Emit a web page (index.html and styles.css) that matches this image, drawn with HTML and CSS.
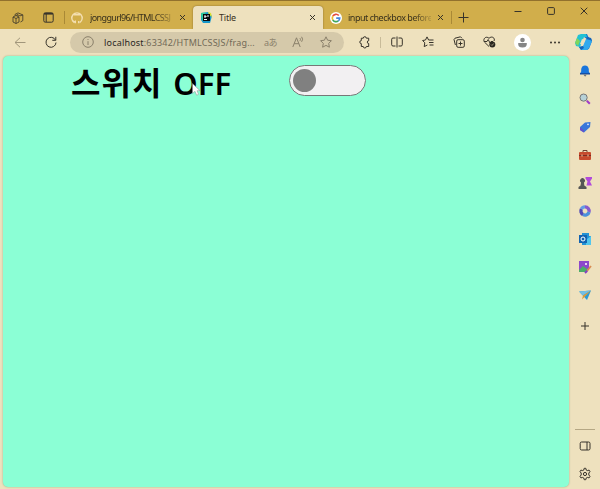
FILE: index.html
```html
<!DOCTYPE html>
<html lang="ko">
<head>
<meta charset="utf-8">
<title>Title</title>
<link rel="stylesheet" href="styles.css">
</head>
<body>
<div class="browser">
  <header class="tabs">
    <span class="slot wide first"><svg width="12" height="12" viewBox="0 0 12 12"><path stroke-width=".8" d="M1 5 4 3.5 7 5v5L4 11.5 1 10ZM1 5l3 1.5L7 5M4 6.5v5M3 3.7V2.4L6 .9l4.8 2v5.7L8.5 10M5 4V2.5l3 1.4 2.8-1"/></svg></span>
    <span class="slot wide"><svg width="11" height="11" viewBox="0 0 11 11"><rect x=".8" y=".8" width="9.4" height="9.4" rx="1.5"/><path stroke-width="1.6" d="M1 1.8h9"/><path d="M3.2 2v8"/></svg></span>
    <div class="tab github">
      <svg class="favicon" width="12" height="12" viewBox="0 0 12 12"><path class="octo" d="M4.3 11.2V9.4Q2.7 10.2 1.8 8.6M7.7 11.2V9M3.6 3.4V2.2l1.3.5h2.2l1.3-.5v1.2"/><path class="octo" d="M3.4 10.6A5.2 5.2 0 1 1 8.6 10.6"/></svg>
      <span class="name fade">jonggurl96/HTMLCSSJ</span>
      <svg class="close" width="7" height="7" viewBox="0 0 7 7"><path d="m1 1 5 5m0-5L1 6"/></svg>
    </div>
    <div class="tab active">
      <svg class="favicon" width="11" height="11" viewBox="0 0 11 11"><path fill="#1797ca" stroke="none" d="M0 1 7 0 11 4 9 11H2L0 8Z"/><path fill="#30d09c" stroke="none" d="m0 1 5-.5L1 9Z"/><path fill="#d8de35" stroke="none" d="m7 0 3 1 1 4-3-2Z"/><path fill="#080b10" stroke="none" d="M2 2h7v7H2z"/><path stroke="#fff" d="M3 4h2v1H3M6 4h2M3 7.5h3"/></svg>
      <span class="name">Title</span>
      <svg class="close" width="7" height="7" viewBox="0 0 7 7"><path d="m1 1 5 5m0-5L1 6"/></svg>
    </div>
    <div class="tab google">
      <svg class="favicon" width="12" height="12" viewBox="0 0 12 12"><circle cx="6" cy="6" r="6" fill="#fff" stroke="none"/><g stroke-width="1.7"><path stroke="#e34b3e" d="M2.8 4.2A3.7 3.7 0 0 1 8.8 3.5"/><path stroke="#eebb2e" d="M2.8 4.2a3.7 3.7 0 0 0 0 3.7"/><path stroke="#43a65a" d="M2.8 7.8a3.7 3.7 0 0 0 5.5 1.1"/><path stroke="#4285dc" d="M8.3 8.9A3.7 3.7 0 0 0 9.7 6.2H6.2"/></g></svg>
      <span class="name fade">input checkbox before</span>
      <svg class="close" width="7" height="7" viewBox="0 0 7 7"><path d="m1 1 5 5m0-5L1 6"/></svg>
    </div>
    <span class="slot plus"><svg width="11" height="11" viewBox="0 0 11 11"><path d="M5.5.5v10M.5 5.5h10"/></svg></span>
    <div class="window">
      <svg width="8" height="8" viewBox="0 0 8 8"><path d="M.5 4.5h7"/></svg>
      <svg width="8" height="8" viewBox="0 0 8 8"><rect x=".6" y=".6" width="6.8" height="6.8" rx="1"/></svg>
      <svg width="8" height="8" viewBox="0 0 8 8"><path d="m.7.7 6.6 6.6m0-6.6L.7 7.3"/></svg>
    </div>
  </header>
  <nav class="toolbar">
    <span class="slot back"><svg width="12" height="11" viewBox="0 0 12 11"><path d="M6 .8 1 5.5l5 4.7M1 5.5h10.5"/></svg></span>
    <span class="slot"><svg width="12" height="12" viewBox="0 0 12 12"><path d="M10.5 4.1A5 5 0 1 0 11 6.5M10.8.8v3.5H7.3"/></svg></span>
    <div class="address">
      <svg width="12" height="12" viewBox="0 0 12 12"><circle cx="6" cy="6" r="5.3"/><path d="M6 5.2V9M6 3v1"/></svg>
      <span class="url"><b>localhost</b>:63342/HTMLCSSJS/frag...</span>
      <span class="translate">aあ</span>
      <span class="slot"><svg width="12" height="12" viewBox="0 0 12 12"><path d="M.8 11 4.5 1.8 8.2 11M2.2 7.7h4.6M8 2.2Q9 3.5 8 4.8M9.6.8q2 2.4 0 5"/></svg></span>
      <span class="slot"><svg width="12" height="12" viewBox="0 0 12 12"><path d="m6 .8 1.6 3.4 3.8.5L8.7 7.4l.7 3.8L6 9.4l-3.4 1.8.7-3.8L.6 4.7l3.8-.5Z"/></svg></span>
    </div>
    <div class="tools">
      <span class="slot puzzle"><svg width="11" height="12" viewBox="0 0 11 12"><path d="M2.3 2.2h2a1.5 1.5 0 0 1 3 0h2.4v2.5a1.4 1.4 0 0 0 0 2.8v3H7.3a1.5 1.5 0 0 1-3 0h-2V7.6a1.5 1.5 0 0 1 0-3Z"/></svg></span>
      <span class="slot"><svg width="12" height="12" viewBox="0 0 12 12"><path d="M4.5 2H2Q.7 2 .7 3.2v5.6Q.7 10 2 10h2.5M7.5 2H10q1.3 0 1.3 1.2v5.6Q11.3 10 10 10H7.5M6 .5v11"/></svg></span>
      <span class="slot"><svg width="12" height="12" viewBox="0 0 12 12"><path d="M11.5 4H6.6L5 .9 3.5 4 .6 4.5l2.2 2.3-.6 3.8L5.4 9M7 6.5h4.5M7.5 9h4"/></svg></span>
      <span class="slot"><svg width="12" height="12" viewBox="0 0 12 12"><rect x="3.7" y="3.7" width="7.6" height="7.6" rx="1.4"/><path d="M7.5 5.5v4M5.5 7.5h4M2.4 9 1 3.5 2 2.2 7.5.8 9 2.3"/></svg></span>
      <span class="slot"><svg width="13" height="12" viewBox="0 0 13 12"><path d="M6 10.5 1.4 6C-.5 3 3-.6 6 2.3 9-.6 12.5 2.2 11 5M1 5.5h3l1.2-2L7 7l1-1.5h2"/><circle cx="9.3" cy="8.5" r="3" fill="#29261f" stroke="none"/><path stroke="#eee1be" stroke-width=".6" d="m8 8.5 1 1 1.7-2"/></svg></span>
      <span class="slot avatar"><svg width="17" height="17" viewBox="0 0 17 17"><g stroke="none"><circle cx="8.5" cy="8.5" r="8.5" fill="#fff"/><circle cx="8.5" cy="6" r="2.3" fill="#858585"/><path fill="#858585" d="M4.2 9h8.6q.5 4.5-4.3 4.5T4.2 9"/></g></svg></span>
      <span class="slot"><svg width="10" height="3" viewBox="0 0 10 3"><g fill="#37332a" stroke="none"><circle cx="1" cy="1.5" r="1"/><circle cx="5" cy="1.5" r="1"/><circle cx="9" cy="1.5" r="1"/></g></svg></span>
    </div>
    <span class="slot copilot"><svg width="17" height="16" viewBox="0 0 17 16"><g stroke="none"><path fill="#1976d0" d="M6 0h6l2 4.2h2l1 3-3 7.5-2 1.3H6l3-2 3-9-3-2Z"/><path fill="#21c1d4" d="M6 0 3 1 0 9l1 3 4 1 4-10h3L11 0Z"/><path fill="#80d65c" d="M0 9 2 4l3 3-2 5Z"/><path fill="#31a9ee" d="m8 12 3-7h4l2 2-3 7-2 2H6l-2-3Z"/><path fill="#1465ba" d="m11 5 2-2 3 1 1 3-2-1ZM4 13l4-1 1 2-3 2Z"/><path fill="#eee1be" d="m7 5 3 1-2 5-3-1Z"/></g></svg></span>
  </nav>
  <div class="content">
    <main class="page">
      <h1><span class="korean">스위치</span><span>OFF</span></h1>
      <div class="switch"><span class="knob"></span></div>
      <svg class="pointer" width="9" height="14" viewBox="0 0 9 14"><path fill="#fff" stroke="#888" stroke-width=".5" d="M.5.5v10L3 8.3l1.6 3.9 2-.9L5 7.7h3Z"/></svg>
    </main>
    <aside class="sidebar">
      <svg viewBox="0 0 12 12"><g stroke="none"><path fill="#1975dc" d="M1 8.7 2.2 6.5V4Q3 .6 6 .6T9.8 4v2.5L11 8.7Z"/><path fill="#164fa5" d="M1 8h10v1.5H1z"/><path fill="#777" d="M4.5 9.5h3Q7 12 6 11.5T4.5 9.5"/></g></svg>
      <svg viewBox="0 0 12 12"><circle cx="4.6" cy="4.6" r="3.6" fill="#b6d1d7" stroke="#777"/><path stroke="#a03bc8" stroke-width="2" d="m7.8 7.8 3 3"/></svg>
      <svg viewBox="0 0 12 12"><path fill="#3977da" stroke="none" d="m1 6 5-4.5L11.5 1 11 6l-6 5.5-3.5-2Z"/><path fill="#6651c9" stroke="none" d="m1 6 4 3.5v2L1 9Z"/><circle cx="9" cy="3.3" r=".9" fill="#e5efff" stroke="none"/></svg>
      <svg viewBox="0 0 12 12"><path stroke="#714031" d="M4 3V1.5h4V3"/><rect y="3" width="12" height="8" rx="1" fill="#c64b2e" stroke="none"/><path stroke="#7c2d23" d="M0 6.5h12"/><path stroke="#edd5ad" d="M3 5.5v2M9 5.5v2"/></svg>
      <svg viewBox="0 0 12 12"><g stroke="none"><path fill="#b14adb" d="M6.5 0H13v1.5L11 4.5l2 4H7.5l1-4-2-3Z"/><path fill="#555" d="M-.5 12h8v-2L5.3 8.5 5 5.5a2.4 2.4 0 1 0-3 0l-.5 3-2 1.5Z"/></g></svg>
      <svg viewBox="0 0 12 12"><g stroke-width="3.4"><path stroke="#865bce" d="M6 1.9A4.1 4.1 0 0 1 10 7"/><path stroke="#4b90dc" d="M10 7A4.1 4.1 0 0 1 4 9.6"/><path stroke="#5049b6" d="M4 9.6A4.1 4.1 0 0 1 2.4 4"/><path stroke="#639be5" d="M2.4 4A4.1 4.1 0 0 1 6 1.9"/></g></svg>
      <svg viewBox="0 0 12 12"><g stroke="none"><path fill="#2392d5" d="M3 0h7v3h2v9H3z"/><path fill="#51c6ed" d="m7 7 5-4v9H7Z"/><path fill="#1263b1" d="M0 2h8v8H0z"/></g><circle cx="4" cy="6" r="2" stroke="#fff"/></svg>
      <svg viewBox="0 0 12 12"><g stroke="none"><path fill="#8e47cb" d="M0 0h10v9H0z"/><path fill="#4dad68" d="m0 9 4-4 4 3v3H0Z"/><circle cx="7" cy="3" r="1" fill="#fff"/></g><path stroke="#d88b53" stroke-width="1.8" d="m8 10 4-5"/><path stroke="#8240c2" stroke-width="2" d="m6 12 2.2-2.2"/></svg>
      <svg viewBox="0 0 12 12"><g stroke="none"><path fill="#2a9bd8" d="m0 2.5 12-1L8 11Z"/><path fill="#74bfe4" d="m0 2.5 12-1-8 5Z"/><path fill="#dc9d37" d="m4 6.5 8-5-6 6-3 3Z"/></g></svg>
      <svg class="add" viewBox="0 0 12 12"><path d="M6 2v8M2 6h8"/></svg>
      <div class="bottom">
        <svg viewBox="0 0 12 12"><rect x="1.2" y="2" width="9.8" height="8" rx="1.4"/><path d="M8 2v8"/></svg>
        <svg viewBox="0 0 12 12"><path d="m4.8 2 .4-1.7h1.6L7.2 2l1.1.6 1.8-.5.9 1.6L9.8 5v2l1.2 1.3-.9 1.6-1.8-.5-1.1.6-.4 1.7H5.2L4.8 10l-1.1-.6-1.8.5L1 8.3 2.2 7V5L1 3.7l.9-1.6 1.8.5Z"/><circle cx="6" cy="6" r="1.6"/></svg>
      </div>
    </aside>
  </div>
</div>
</body>
</html>
```
FILE: styles.css
```css
* { box-sizing: border-box; }
body { margin: 0; font-family: "Noto Sans", "Noto Sans CJK KR", sans-serif; overflow: hidden; }
svg { display: block; flex: none; fill: none; stroke: #37332a; stroke-width: 1; overflow: visible; }
.browser { display: grid; grid-template-rows: 29px 27px 1fr; width: 600px; height: 489px; background: #eee1be; }
.tabs { display: flex; align-items: stretch; background: #d1ae4b; border-top: 1px solid #92712d; }
.slot { display: flex; align-items: center; justify-content: center; flex: none; width: 31px; }
.wide { width: 30px; padding: 5px 2px 0 0; }
.wide.first { width: 34px; padding-left: 3px; }
.tab { display: flex; align-items: center; margin-top: 5px; width: 129px; font-size: 9px; color: #38301c; }
.tab.github { padding-left: 6px; border-left: 1px solid #a98936; margin-top: 10px; height: 13px; }
.favicon { margin-right: 7px; }
.octo { stroke: #f3deb0; stroke-width: 1.4; }
.name { flex: none; width: 83px; white-space: nowrap; line-height: 14px; }
.github .name { letter-spacing: -.62px; }
.google .name { letter-spacing: -.48px; }
.fade { mask-image: linear-gradient(to right, #000 78%, rgba(0, 0, 0, .2) 100%); }
.close { margin-left: 6px; }
.tab.active { width: 130px; padding-left: 8px; background: #eee1be; border-radius: 4px 4px 0 0; box-shadow: 0 0 2px #80672c; clip-path: inset(-3px -3px 0); }
.active .name { letter-spacing: -.2px; }
.active .close { margin-left: 7px; }
.tab.google { padding-left: 7px; border-right: 1px solid #a98936; margin-top: 10px; height: 13px; }
.google .favicon { margin-right: 6px; }
.plus { width: 23px; padding-top: 5px; }
.window { display: flex; gap: 25px; margin-left: auto; padding: 6px 12px 0 0; }
.toolbar { display: flex; align-items: center; padding-bottom: 1px; }
.back { width: 39px; }
.back svg { stroke: #a1967b; }
.toolbar > .slot:nth-child(2) { width: 23px; }
.address { display: flex; align-items: center; width: 274px; height: 21px; margin-left: 8px; padding-left: 12px; border-radius: 11px; background: #d5c9aa; font-size: 9px; color: #726a57; }
.address svg { stroke: #8a806a; }
.url { width: 157px; margin-left: 10px; letter-spacing: .19px; white-space: nowrap; }
.url b { font-weight: 400; color: #29261f; }
.translate { width: 19px; letter-spacing: -.6px; color: #8a806a; text-align: center; white-space: nowrap; margin-right: 4px; }
.address .slot { width: 28px; }
.tools { display: flex; align-items: center; margin-left: 5px; }
.puzzle { width: 32px; height: 11px; border-right: 1px solid #c8bb99; padding-right: 1px; }
.tools .avatar { width: 34px; }
.copilot { width: 27px; }
.content { display: grid; grid-template-columns: 566px 1fr; padding: 0 0 2px 3px; min-height: 0; }
.page { position: relative; display: flex; align-items: flex-start; background: #8bffd5; border-radius: 5px; box-shadow: 0 0 2px #9da982; }
.page h1 { display: flex; gap: 11px; width: 218px; margin: 4px 0 0 68px; font-size: 31px; font-weight: 600; line-height: 46px; white-space: nowrap; color: #000; }
.korean { font-size: 32px; font-weight: 600; letter-spacing: 1px; }
.switch { display: flex; align-items: center; width: 77px; height: 31px; margin-top: 9px; padding-left: 3px; border: 1px solid #777; border-radius: 16px; background: #f2f0f2; }
.knob { width: 23px; height: 23px; border-radius: 50%; background: #808080; }
.pointer { position: absolute; left: 189px; top: 27px; }
.sidebar { display: flex; flex-direction: column; align-items: center; gap: 16px; padding-top: 9px; }
.sidebar svg { width: 12px; height: 12px; }
.add { margin-top: 3px; }
.bottom { display: flex; flex-direction: column; align-items: center; gap: 16px; width: 20px; margin-top: auto; padding: 10px 0 7px; border-top: 1px solid #b5a784; }
```
